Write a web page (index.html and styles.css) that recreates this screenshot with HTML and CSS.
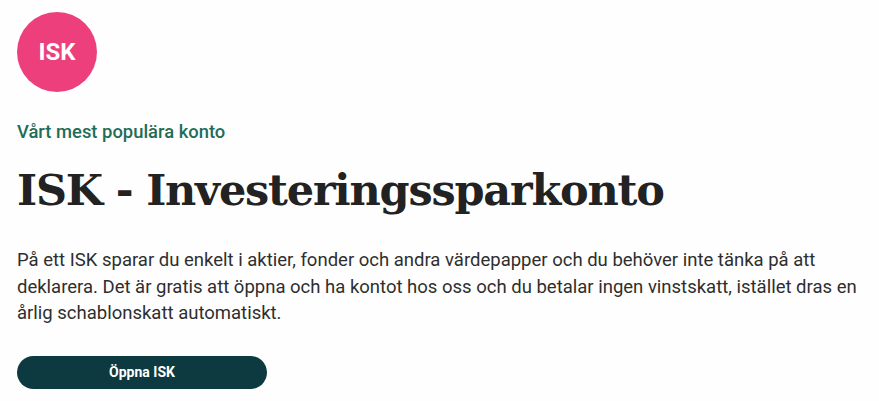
FILE: index.html
```html
<!DOCTYPE html>
<html lang="sv">
<head>
<meta charset="utf-8">
<link rel="stylesheet" href="styles.css">
</head>
<body>
<main class="card">
  <div class="badge">ISK</div>
  <p class="eyebrow">Vårt mest populära konto</p>
  <h1 class="title">ISK - Investeringssparkonto</h1>
  <p class="lead">På ett ISK sparar du enkelt i aktier, fonder och andra värdepapper och du behöver inte tänka på att deklarera. Det är gratis att öppna och ha kontot hos oss och du betalar ingen vinstskatt, istället dras en årlig schablonskatt automatiskt.</p>
  <a class="btn" href="#">Öppna ISK</a>
</main>
</body>
</html>
```

FILE: styles.css
```css
html, body {
  margin: 0;
  padding: 0;
  background: #fefefe;
}
.card {
  padding: 12px 17px 0 17px;
  font-family: Roboto, "Liberation Sans", sans-serif;
  color: #2b2b2b;
  display: flex;
  flex-direction: column;
  align-items: flex-start;
}
.badge {
  width: 80px;
  height: 80px;
  border-radius: 50%;
  background: #ec3f7b;
  color: #fff;
  font-weight: 700;
  font-size: 24px;
  display: flex;
  align-items: center;
  justify-content: center;
}
.eyebrow {
  margin: 28px 0 0 0;
  font-size: 18.4px;
  line-height: 24px;
  font-weight: 500;
  color: #1f6d58;
}
.title {
  margin: 18px 0 0 0;
  font-family: "DejaVu Serif", "Liberation Serif", serif;
  font-weight: 700;
  font-size: 43px;
  line-height: 56px;
  color: #222;
  letter-spacing: -1.2px;
}
.lead {
  margin: 29px 0 0 0;
  font-size: 18.5px;
  line-height: 26.5px;
  color: #2e2e2e;
}
.btn {
  margin-top: 29px;
  width: 250px;
  height: 33px;
  border-radius: 17px;
  background: #0d3a40;
  color: #fff;
  font-size: 14px;
  font-weight: 700;
  text-decoration: none;
  display: flex;
  align-items: center;
  justify-content: center;
}
```
